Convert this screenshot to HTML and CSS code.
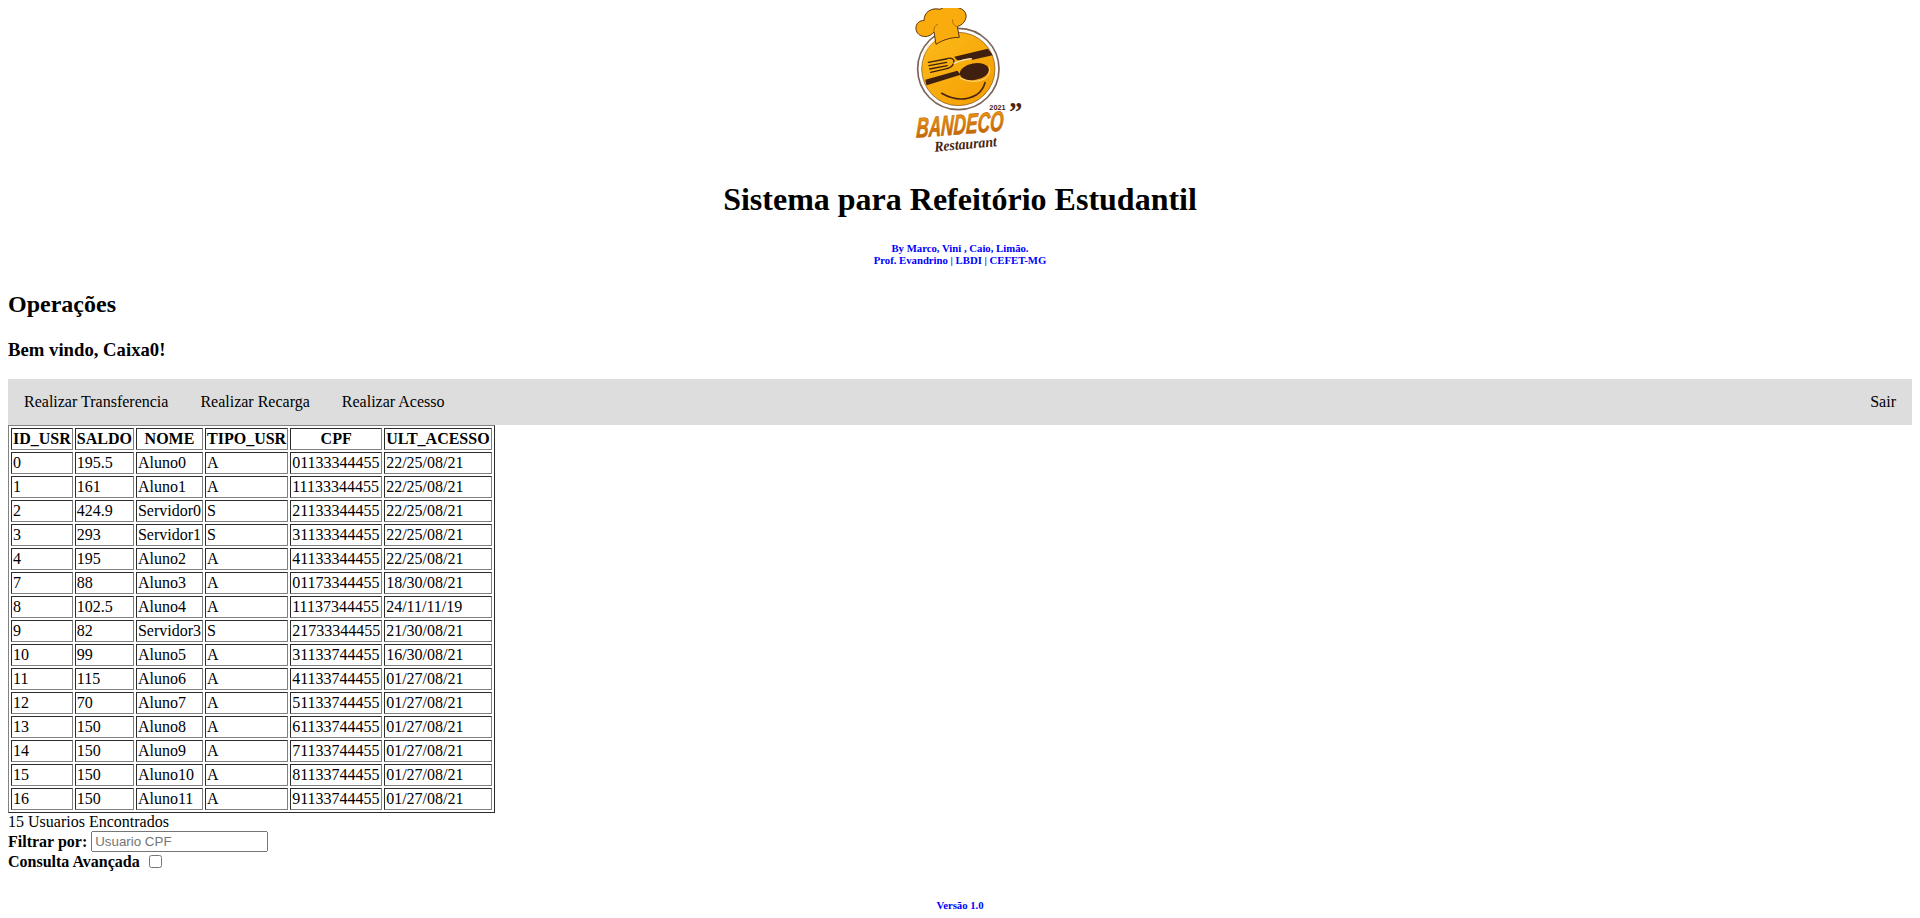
FILE: index.html
```html
<!DOCTYPE html>
<html lang="pt-BR">
<head>
<meta charset="utf-8">
<title>Sistema para Refeitório Estudantil</title>
<link rel="stylesheet" href="styles.css">
</head>
<body>
<header class="top">
  <svg class="logo" viewBox="0 24 600 456" width="200" height="152" aria-label="Bandeco Restaurant">
    <defs>
      <linearGradient id="face" x1="0" y1="0" x2="1" y2="1">
        <stop offset="0" stop-color="#fdbb1a"/>
        <stop offset="1" stop-color="#f39c00"/>
      </linearGradient>
      <linearGradient id="word" x1="0" y1="0" x2="0" y2="1">
        <stop offset="0" stop-color="#f0a010"/>
        <stop offset="1" stop-color="#b85a06"/>
      </linearGradient>
    </defs>
    <circle cx="295" cy="207" r="122" fill="#fff" stroke="#7a6458" stroke-width="5"/>
    <circle cx="295" cy="207" r="110" fill="url(#face)" stroke="#7a4b20" stroke-width="2"/>
    <path d="M192 160A112 112 0 0 1 262 102" fill="none" stroke="#ffe7a8" stroke-width="4"/>
    <path d="M283 170L383 146Q392 155 398 166L338 179Q326 172 300 181Q288 182 283 170Z" fill="#3f2010"/>
    <path d="M196 239L292 212L302 224L200 256Q197 248 196 239Z" fill="#3f2010"/>
    <ellipse cx="343" cy="215" rx="44" ry="25" transform="rotate(-10 343 215)" fill="#3f2010"/>
    <path d="M300 234Q340 254 375 236Q392 224 388 200" fill="none" stroke="#ffd98a" stroke-width="3"/>
    <g fill="none" stroke="#3f2010" stroke-width="4" stroke-linecap="round">
      <path d="M205 187L258 177"/>
      <path d="M207 197L260 187"/>
      <path d="M209 207L262 197"/>
      <path d="M212 217L264 205"/>
      <path d="M258 177Q276 170 282 182Q282 198 264 205"/>
    </g>
    <path d="M282 190Q310 178 334 176" fill="none" stroke="#f7e6c4" stroke-width="4" stroke-linecap="round"/>
    <path d="M245 280Q300 312 350 284Q368 272 375 248" fill="none" stroke="#4a2410" stroke-width="5" stroke-linecap="round"/>
    <path d="M228 133L222 96C205 118 172 112 168 88C166 70 180 60 192 62C192 35 215 22 240 28C258 14 295 18 312 32C326 48 316 72 292 80L298 112C272 112 248 120 228 133Z" fill="#f9ac0c" stroke="#5b3413" stroke-width="3" stroke-linejoin="round"/>
    <path d="M222 96Q220 78 234 72M292 80Q276 76 278 58" fill="none" stroke="#8a5416" stroke-width="2"/>
    <text class="year" x="388" y="330">2021</text>
    <text class="quote" x="447" y="362">”</text>
    <text class="brand" x="168" y="413" textLength="262" lengthAdjust="spacingAndGlyphs" transform="rotate(-4.5 168 413) translate(168 413) skewX(-7) translate(-168 -413)" fill="url(#word)">BANDECO</text>
    <text class="rest" x="224" y="455" textLength="188" lengthAdjust="spacingAndGlyphs" transform="rotate(-5 224 455)">Restaurant</text>
  </svg>
  <h1 class="title">Sistema para Refeitório Estudantil</h1>
  <p class="credits">By Marco, Vini , Caio, Limão.<br>Prof. Evandrino | LBDI | CEFET-MG</p>
</header>
<main>
  <h2 class="section">Operações</h2>
  <h3 class="welcome">Bem vindo, Caixa0!</h3>
  <nav class="menu">
    <a class="menu-item" href="#">Realizar Transferencia</a>
    <a class="menu-item" href="#">Realizar Recarga</a>
    <a class="menu-item" href="#">Realizar Acesso</a>
    <a class="menu-item menu-exit" href="#">Sair</a>
  </nav>
  <table class="users" border="1">
    <thead>
      <tr><th>ID_USR</th><th>SALDO</th><th>NOME</th><th>TIPO_USR</th><th>CPF</th><th>ULT_ACESSO</th></tr>
    </thead>
    <tbody>
      <tr><td>0</td><td>195.5</td><td>Aluno0</td><td>A</td><td>01133344455</td><td>22/25/08/21</td></tr>
      <tr><td>1</td><td>161</td><td>Aluno1</td><td>A</td><td>11133344455</td><td>22/25/08/21</td></tr>
      <tr><td>2</td><td>424.9</td><td>Servidor0</td><td>S</td><td>21133344455</td><td>22/25/08/21</td></tr>
      <tr><td>3</td><td>293</td><td>Servidor1</td><td>S</td><td>31133344455</td><td>22/25/08/21</td></tr>
      <tr><td>4</td><td>195</td><td>Aluno2</td><td>A</td><td>41133344455</td><td>22/25/08/21</td></tr>
      <tr><td>7</td><td>88</td><td>Aluno3</td><td>A</td><td>01173344455</td><td>18/30/08/21</td></tr>
      <tr><td>8</td><td>102.5</td><td>Aluno4</td><td>A</td><td>11137344455</td><td>24/11/11/19</td></tr>
      <tr><td>9</td><td>82</td><td>Servidor3</td><td>S</td><td>21733344455</td><td>21/30/08/21</td></tr>
      <tr><td>10</td><td>99</td><td>Aluno5</td><td>A</td><td>31133744455</td><td>16/30/08/21</td></tr>
      <tr><td>11</td><td>115</td><td>Aluno6</td><td>A</td><td>41133744455</td><td>01/27/08/21</td></tr>
      <tr><td>12</td><td>70</td><td>Aluno7</td><td>A</td><td>51133744455</td><td>01/27/08/21</td></tr>
      <tr><td>13</td><td>150</td><td>Aluno8</td><td>A</td><td>61133744455</td><td>01/27/08/21</td></tr>
      <tr><td>14</td><td>150</td><td>Aluno9</td><td>A</td><td>71133744455</td><td>01/27/08/21</td></tr>
      <tr><td>15</td><td>150</td><td>Aluno10</td><td>A</td><td>81133744455</td><td>01/27/08/21</td></tr>
      <tr><td>16</td><td>150</td><td>Aluno11</td><td>A</td><td>91133744455</td><td>01/27/08/21</td></tr>
    </tbody>
  </table>
  <div class="count">15 Usuarios Encontrados</div>
  <div class="filter">
    <label class="field-label" for="cpf">Filtrar por:</label>
    <input class="field-input" id="cpf" type="text" placeholder="Usuario CPF">
  </div>
  <div class="advanced">
    <label class="field-label" for="adv">Consulta Avançada</label>
    <input class="field-check" id="adv" type="checkbox">
  </div>
</main>
<footer class="version">Versão 1.0</footer>
</body>
</html>
```

FILE: styles.css
```css
html, body {
  background: #fff;
}
body {
  margin: 8px;
  color: #000;
  font-family: "Liberation Serif", "Times New Roman", serif;
  font-size: 16px;
}
.top {
  text-align: center;
}
.logo {
  display: block;
  margin: 0 auto;
}
.year {
  font-family: "Liberation Sans", Arial, sans-serif;
  font-weight: 700;
  font-size: 22px;
  fill: #4a2410;
}
.quote {
  font-family: "Liberation Serif", serif;
  font-weight: 700;
  font-size: 80px;
  fill: #4a2410;
}
.brand {
  font-family: "Liberation Sans", Arial, sans-serif;
  font-weight: 700;
  font-style: italic;
  font-size: 84px;
  stroke: #c56a08;
  stroke-width: 2px;
}
.rest {
  font-family: "Liberation Serif", serif;
  font-weight: 700;
  font-style: italic;
  font-size: 44px;
  fill: #4a2410;
}
.title {
  margin: 21.44px 0;
  font-size: 32px;
  font-weight: 700;
}
.credits {
  margin: 0;
  padding: 2px 0 5px;
  color: #00f;
  font-size: 10.72px;
  font-weight: 700;
  line-height: 12px;
}
.section {
  margin: 19.92px 0 20.92px;
  font-size: 24px;
  font-weight: 700;
}
.welcome {
  margin: 18.72px 0;
  font-size: 18.72px;
  font-weight: 700;
}
.menu {
  display: flex;
  background: #ddd;
}
.menu-item {
  padding: 14px 16px;
  color: #000;
  text-decoration: none;
  line-height: 18px;
}
.menu-exit {
  margin-left: auto;
}
.users {
  border-spacing: 2px;
}
.users th,
.users td {
  padding: 1px;
}
.filter,
.advanced {
  display: flex;
  align-items: center;
}
.field-label {
  font-weight: 700;
}
.field-input {
  width: 177px;
  height: 21px;
  box-sizing: border-box;
  margin-left: 4px;
  padding: 1px 2px;
  font-family: "Liberation Sans", Arial, sans-serif;
  font-size: 13.33px;
}
.field-check {
  margin: 3px 3px 3px 9px;
}
.version {
  margin-top: 28px;
  color: #00f;
  font-size: 10.72px;
  font-weight: 700;
  text-align: center;
}
```
